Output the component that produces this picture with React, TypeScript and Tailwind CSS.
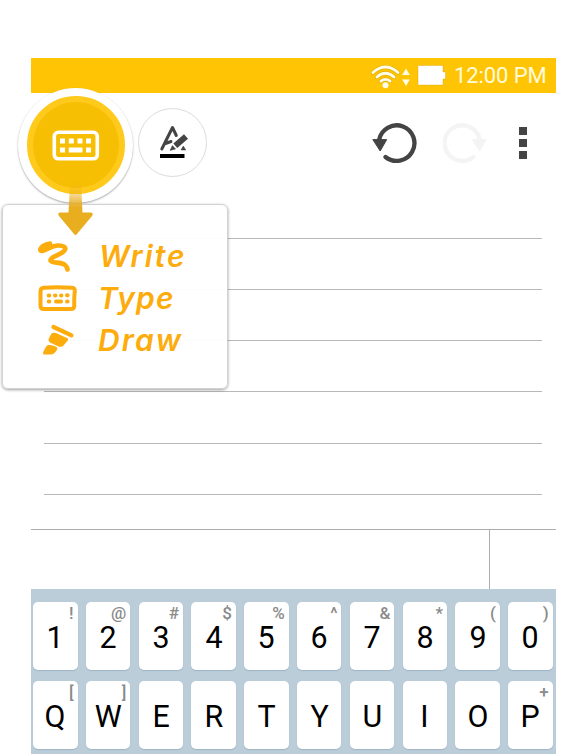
import React from "react";

const numberRow: [string, string][] = [
  ["1", "!"], ["2", "@"], ["3", "#"], ["4", "$"], ["5", "%"],
  ["6", "^"], ["7", "&"], ["8", "*"], ["9", "("], ["0", ")"],
];
const letterRow: [string, string][] = [
  ["Q", "["], ["W", "]"], ["E", ""], ["R", ""], ["T", ""],
  ["Y", ""], ["U", ""], ["I", ""], ["O", ""], ["P", "+"],
];

function KeyRow({ keys }: { keys: [string, string][] }) {
  return (
    <div className="flex gap-[8.3px]">
      {keys.map(([main, alt]) => (
        <div
          key={main}
          className="relative flex h-[67.5px] w-[44.5px] shrink-0 items-center justify-center rounded-[5px] bg-white pt-[2px] text-[32px] leading-none text-black shadow-[0_1px_1px_rgba(110,140,160,0.35)]"
        >
          <span className="scale-x-[0.95]">{main}</span>
          <span className="absolute right-[4px] top-[3px] text-[17px] font-medium leading-[17px] text-[#8a8a8a]">{alt}</span>
        </div>
      ))}
    </div>
  );
}

function StatusBar() {
  return (
    <div className="flex h-[35px] items-center justify-end bg-[#ffc505] pr-[9px] text-[#fffbdc]">
      <svg className="mr-[8px]" width="76" height="28" viewBox="0 0 76 28">
        <g fill="none" stroke="#b58b00" strokeOpacity=".4" strokeWidth="4.2" strokeLinecap="round">
          <path d="M3 10.5Q15.5-.5 28 10.5M7 15Q15.5 7.5 24 15M11 19.2Q15.5 15.5 20 19.2" />
        </g>
        <g fill="none" stroke="#fffde9" strokeWidth="2.8" strokeLinecap="round">
          <path d="M3 10.5Q15.5-.5 28 10.5M7 15Q15.5 7.5 24 15M11 19.2Q15.5 15.5 20 19.2" />
        </g>
        <circle cx="15.5" cy="23.3" r="3" fill="#fffde9" />
        <path d="M36 6.4L39.8 13H32.2ZM36 24L39.8 17.5H32.2Z" fill="#fffde9" />
        <path d="M48 3.5H73V10H75.5V17H73V23H48Z" fill="white" stroke="#cf9e00" strokeOpacity=".35" />
      </svg>
      <span className="w-[93px] whitespace-nowrap text-[22px] leading-[35px] tracking-[-0.1px]">12:00 PM</span>
    </div>
  );
}

function KeyboardGlyph() {
  return (
    <svg width="48" height="31" viewBox="0 0 48 31" fill="white">
      <rect x="2.3" y="2.3" width="43" height="26.5" rx="4" fill="none" stroke="white" strokeWidth="3.6" />
      <path d="M8 8.5h5v5H8zM16.8 8.5h5v5h-5zM25.5 8.5h5v5h-5zM34 8.5h5v5h-5zM8 17.5h5v5H8zM16.8 17.5h13.7v5H16.8zM34 17.5h5v5h-5z" />
    </svg>
  );
}

function Toolbar() {
  return (
    <div className="-ml-[13px] flex h-[144px] w-[538px]">
      <div className="-mt-[5.5px] flex h-[115px] w-[115px] shrink-0 items-center justify-center rounded-full bg-white shadow-[0_1px_2px_rgba(0,0,0,0.35)]">
        <div className="flex h-[98px] w-[98px] items-center justify-center rounded-full border-[6px] border-[#ffca1b] bg-[#f6bf04]">
          <KeyboardGlyph />
        </div>
      </div>
      <div className="ml-[4.5px] mt-[15px] flex h-[69px] w-[69px] shrink-0 items-center justify-center rounded-full border border-[#dcdcdc] bg-white">
        <svg width="69" height="69" viewBox="0 0 69 69" className="shrink-0">
          <path d="M23.8 41L34.5 19.5L38.3 27.5M27.5 35.5L33 33.5" fill="none" stroke="#444" strokeWidth="3" strokeLinecap="round" strokeLinejoin="round" />
          <path d="M37.3 37.8L48 28.4" fill="none" stroke="#444" strokeWidth="6" />
          <path d="M34.4 37.5L37.6 41L32 42.5ZM45.3 38L47.8 42H43Z" fill="#444" stroke="#444" strokeWidth=".5" />
          <path d="M22 46H46.5V50H22Z" fill="#000" />
        </svg>
      </div>
      <svg className="ml-[165px] mt-[28px] shrink-0" width="45" height="46" viewBox="0 0 45 46">
        <path d="M13.5 36A17.8 17.8 0 1 0 7.2 18.5" fill="none" stroke="#444" strokeWidth="4.3" strokeLinecap="round" />
        <path d="M.8 18.6H14.7L8.2 30Z" fill="#444" stroke="#444" strokeLinejoin="round" />
      </svg>
      <svg className="ml-[26px] mt-[28px] shrink-0" width="45" height="46" viewBox="0 0 45 46">
        <path d="M30.5 36A17.8 17.8 0 1 1 36.8 18.5" fill="none" stroke="#f4f4f4" strokeWidth="4.3" strokeLinecap="round" />
        <path d="M29.3 18.6H43.2L36.5 30Z" fill="#f4f4f4" stroke="#f4f4f4" strokeLinejoin="round" />
      </svg>
      <div className="ml-[31px] mt-[34px] flex flex-col gap-[4px]">
        <i className="h-[8px] w-[8px] bg-[#444]" />
        <i className="h-[8px] w-[8px] bg-[#444]" />
        <i className="h-[8px] w-[8px] bg-[#444]" />
      </div>
    </div>
  );
}

function WriteIcon() {
  return (
    <svg width="40" height="34" viewBox="0 0 40 34" className="shrink-0">
      <path d="M12 4.5C7 5 2 8.5 2.3 11C4 14.5 13 6.5 20 6.5C27 6.5 29.5 9.5 25 13C20 16.5 12 18.5 12.5 21.5C13.5 24.5 22 22.8 26.5 25.5Q29 27.5 29.5 30.5" fill="none" stroke="#fdac0d" strokeWidth="4.7" strokeLinecap="round" strokeLinejoin="round" />
    </svg>
  );
}

function TypeIcon() {
  return (
    <svg width="40" height="27" viewBox="0 0 40 27" className="shrink-0">
      <path d="M6 2.7Q19 1.8 34 2.7Q37 3 36.8 6Q36 13 36.3 21Q36 24 33 24H6Q2.5 24 2.5 20.5V6Q2.5 3 6 2.7Z" fill="none" stroke="#fdac0d" strokeWidth="4" />
      <path d="M10.7 10.5h.6M17 10.5h.4M23 10.5h.4M29 10.2h.6M10.7 16.5h.6M18 16.5h5M29 16.5h.6" fill="none" stroke="#fdac0d" strokeWidth="4" strokeLinecap="round" />
    </svg>
  );
}

function DrawIcon() {
  return (
    <svg width="40" height="32" viewBox="0 0 40 32" className="shrink-0">
      <path d="M15.5 3L33.5 11.3" stroke="#fdac0d" strokeWidth="4.2" strokeLinecap="round" />
      <path d="M13.5 9.5Q15.5 8 18.5 9.3L29 14Q31 15 29.5 16.7L25.5 21.5Q24 23.5 20.5 22.5L12.5 18.8Q9.5 17 11 14Z" fill="#fdac0d" />
      <path d="M10 21Q14 20.5 18 22.8Q20.5 24 18.5 26.5Q16 30.5 13 30.5H6Q4 30 6 26.5Q8 21.8 10 21Z" fill="#fdac0d" />
    </svg>
  );
}

function ModeMenu() {
  const label = "whitespace-nowrap font-['Inter','Noto_Sans',sans-serif] text-[30px] font-semibold italic leading-[42px] text-[#fdac0d]";
  return (
    <div className="absolute left-[2px] top-[204px] h-[185px] w-[226px] rounded-[6px] border border-[#d2d2d2] bg-white/95 pl-[35px] pt-[30px] shadow-[0_1px_3px_rgba(0,0,0,0.38)]">
      <div className="flex h-[42px] items-center">
        <WriteIcon />
        <span className={`${label} ml-[21px] tracking-[2px]`}>Write</span>
      </div>
      <div className="flex h-[42px] items-center">
        <TypeIcon />
        <span className={`${label} ml-[20px] tracking-[1.2px]`}>Type</span>
      </div>
      <div className="flex h-[42px] items-center">
        <DrawIcon />
        <span className={`${label} ml-[20px] tracking-[2px]`}>Draw</span>
      </div>
    </div>
  );
}

export default function App() {
  return (
    <div className="relative h-[754px] w-[588px] overflow-hidden bg-white pl-[31px] pt-[58px] font-['Roboto',sans-serif]">
      <div className="w-[525px]">
        <StatusBar />
        <Toolbar />
        <div className="ml-[12.5px] flex h-[292px] w-[498.5px] flex-col gap-[50.3px] pt-[0.6px]">
          {[0, 1, 2, 3, 4, 5].map((n) => (
            <div key={n} className="h-px shrink-0 bg-[#b8b8b8]" />
          ))}
        </div>
        <div className="flex h-[60px] justify-end border-t-[1.5px] border-[#adadad]">
          <div className="w-[67px] border-l-[1.5px] border-[#adadad]" />
        </div>
        <div className="flex h-[165px] flex-col gap-[11.5px] bg-[#bbcdd9] pl-[2px] pt-[13px]">
          <KeyRow keys={numberRow} />
          <KeyRow keys={letterRow} />
        </div>
      </div>
      <ModeMenu />
      <svg className="absolute left-[57px] top-[182px]" width="38" height="55" viewBox="0 0 38 55">
        <defs>
          <linearGradient id="arrow" x1="0" y1="0" x2="0" y2="1">
            <stop offset="0" stopColor="#e9ad20" stopOpacity="0" />
            <stop offset=".48" stopColor="#e9ad20" />
            <stop offset="1" stopColor="#e9ad20" />
          </linearGradient>
        </defs>
        <path d="M13 0H24L25.5 30.5H34Q37 31 35 34L20 52Q18.5 54 17 52L2 34Q0 31 3 30.5H11.5Z" fill="url(#arrow)" />
      </svg>
    </div>
  );
}
